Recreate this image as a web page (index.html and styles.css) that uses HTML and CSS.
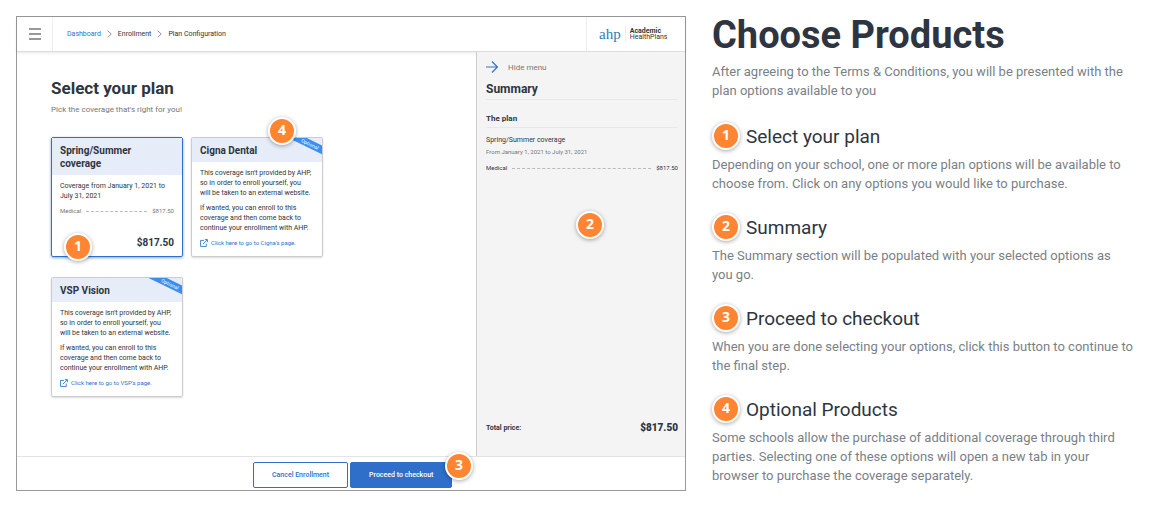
FILE: index.html
```
<!DOCTYPE html>
<html lang="en">
<head>
  <meta charset="UTF-8" />
  <meta name="viewport" content="width=device-width, initial-scale=1.0"/>
  <title>Choose Products</title>
  <link rel="stylesheet" href="styles.css">
</head>
<body>

<div class="app">
  <header class="topbar">
    <button class="menu-btn" aria-label="Open menu">
      <svg width="12" height="12" viewBox="0 0 12 12" fill="none" stroke="#333" stroke-width="1.2">
        <path d="M0 1h12M0 6h12M0 11h12"/>
      </svg>
    </button>
    <nav class="breadcrumb" aria-label="Breadcrumb">
      <a href="#">Dashboard</a>
      <svg width="5" height="8" viewBox="0 0 5 8" fill="none" stroke="#777" stroke-width="0.8"><path d="M.7 .7L4.2 4 .7 7.3"/></svg>
      <span>Enrollment</span>
      <svg width="5" height="8" viewBox="0 0 5 8" fill="none" stroke="#777" stroke-width="0.8"><path d="M.7 .7L4.2 4 .7 7.3"/></svg>
      <span>Plan Configuration</span>
    </nav>
    <div class="logo">
      <span class="logo-mark">ahp</span>
      <span class="logo-name"><b>Academic</b><br>HealthPlans</span>
    </div>
  </header>

  <div class="body">
    <main class="content">
      <h2>Select your plan</h2>
      <p class="hint">Pick the coverage that's right for you!</p>

      <div class="plans">
        <article class="plan selected">
          <h3>Spring/Summer coverage</h3>
          <div class="plan-body">
            <p>Coverage from January 1, 2021 to July 31, 2021</p>
            <div class="line small"><span>Medical</span><i></i><span>$817.50</span></div>
            <strong class="price">$817.50</strong>
          </div>
          <span class="badge badge-plan">1</span>
        </article>

        <article class="plan">
          <h3>Cigna Dental</h3>
          <div class="ribbon"><span>Optional</span></div>
          <div class="plan-body">
            <p>This coverage isn't provided by AHP,<br>so in order to enroll yourself, you<br>will be taken to an external website.</p>
            <p>If wanted, you can enroll to this coverage and then come back to continue your enrollment with AHP.</p>
            <a class="ext" href="#">
              <svg width="8" height="8" viewBox="0 0 14 14" fill="none" stroke="currentColor" stroke-width="1.5"><path d="M7 2.5H1v10.500h10V8M5 9l7.500-7.500M8.500 1H13v4.500"/></svg>
              Click here to go to Cigna's page.
            </a>
          </div>
          <span class="badge badge-optional">4</span>
        </article>

        <article class="plan">
          <h3>VSP Vision</h3>
          <div class="ribbon"><span>Optional</span></div>
          <div class="plan-body">
            <p>This coverage isn't provided by AHP,<br>so in order to enroll yourself, you<br>will be taken to an external website.</p>
            <p>If wanted, you can enroll to this coverage and then come back to continue your enrollment with AHP.</p>
            <a class="ext" href="#">
              <svg width="8" height="8" viewBox="0 0 14 14" fill="none" stroke="currentColor" stroke-width="1.5"><path d="M7 2.5H1v10.500h10V8M5 9l7.500-7.500M8.500 1H13v4.500"/></svg>
              Click here to go to VSP's page.
            </a>
          </div>
        </article>
      </div>
    </main>

    <aside class="summary">
      <button class="hide-btn">
        <svg width="12" height="12" viewBox="0 0 12 12" fill="none" stroke="#2f6fca" stroke-width="1.2"><path d="M0 6h11.300M6 .5L11.500 6 6 11.500"/></svg>
        Hide menu
      </button>
      <h2>Summary</h2>
      <h3>The plan</h3>
      <p class="plan-name">Spring/Summer coverage</p>
      <p class="plan-dates">From January 1, 2021 to July 31, 2021</p>
      <div class="line"><span>Medical</span><i></i><span>$817.50</span></div>
      <div class="total"><span>Total price:</span><strong class="price">$817.50</strong></div>
      <span class="badge badge-summary">2</span>
    </aside>
  </div>

  <footer class="actions">
    <button class="btn">Cancel Enrollment</button>
    <button class="btn primary">Proceed to checkout</button>
    <span class="badge badge-checkout">3</span>
  </footer>
</div>

<section class="guide">
  <h1>Choose Products</h1>
  <p class="intro">After agreeing to the Terms &amp; Conditions, you will be presented with the plan options available to you</p>

  <h2><span class="badge">1</span>Select your plan</h2>
  <p>Depending on your school, one or more plan options will be available to choose from. Click on any options you would like to purchase.</p>

  <h2><span class="badge">2</span>Summary</h2>
  <p>The Summary section will be populated with your selected options as<br>you go.</p>

  <h2><span class="badge">3</span>Proceed to checkout</h2>
  <p>When you are done selecting your options, click this button to continue to the final step.</p>

  <h2><span class="badge">4</span>Optional Products</h2>
  <p>Some schools allow the purchase of additional coverage through third parties. Selecting one of these options will open a new tab in your browser to purchase the coverage separately.</p>
</section>

</body>
</html>
```
FILE: styles.css
```
* {
  box-sizing: border-box;
}

body {
  font-family: Roboto, sans-serif;
  background: #fff;
  color: #2e3540;
  margin: 0;
  padding: 16px 33px 31px 16px;
  min-height: 100vh;
  display: grid;
  grid-template-columns: minmax(0, 670fr) minmax(0, 423fr);
  gap: 26px;
}

h1, h2, h3, p {
  margin: 0;
}

button {
  font-family: inherit;
  cursor: pointer;
}

a {
  color: #2f6fca;
  text-decoration: none;
}

.app {
  border: 1px solid #999;
  display: flex;
  flex-direction: column;
}

/* top bar */
.topbar {
  display: flex;
  height: 35px;
  border-bottom: 1px solid #ddd;
  box-shadow: 0 1px 3px rgba(0,0,0,0.1);
  position: relative;
}

.menu-btn {
  width: 36px;
  padding: 0;
  background: none;
  border: none;
  border-right: 1px solid #eee;
}

.menu-btn svg {
  display: block;
  margin: auto;
}

.breadcrumb {
  flex: 1;
  display: flex;
  align-items: center;
  gap: 6px;
  padding-left: 14px;
  font-size: 7px;
}

.logo {
  width: 99px;
  display: flex;
  align-items: center;
  padding-left: 12px;
  border-left: 1px solid #eee;
}

.logo-mark {
  font-family: "Liberation Serif", serif;
  font-size: 15px;
  line-height: 16px;
  color: #2a7fb8;
  padding-right: 4px;
  margin-right: 4px;
  border-right: 1px solid #eee;
}

.logo-name {
  font-size: 7px;
  line-height: 6px;
}

/* middle */
.body {
  flex: 1;
  display: flex;
}

.content {
  flex: 1;
  padding: 25px 34px 20px;
}

.content h2 {
  font-size: 17px;
  line-height: 22px;
}

.hint {
  margin-top: 6px;
  font-size: 8px;
  line-height: 10px;
  color: #777;
}

.plans {
  display: grid;
  grid-template-columns: repeat(auto-fill, 132px);
  grid-auto-rows: minmax(120px, auto);
  gap: 20px 8px;
  margin-top: 22px;
}

.plan {
  position: relative;
  display: flex;
  flex-direction: column;
  border: 1px solid #ccc;
  border-radius: 2px;
  box-shadow: 0 1px 2px rgba(0,0,0,0.15);
}

.plan.selected {
  border-color: #2f6fca;
  box-shadow: 0 1px 3px rgba(47,111,202,0.6);
}

.plan h3 {
  padding: 6px 8px 5px;
  background: #e6ecf8;
  font-size: 10px;
  line-height: 13px;
}

.plan-body {
  flex: 1;
  display: flex;
  flex-direction: column;
  padding: 6px 8px;
  font-size: 7px;
  line-height: 10px;
}

.plan-body p {
  margin-bottom: 5px;
}

.price {
  font-size: 10px;
  line-height: 14px;
}

.plan .price {
  margin-top: auto;
  text-align: right;
}

.ext {
  display: flex;
  align-items: center;
  gap: 3px;
  font-size: 6px;
}

.line {
  display: flex;
  align-items: center;
  gap: 5px;
  font-size: 6px;
  line-height: 10px;
}

.line i {
  flex: 1;
  border-top: 1px dashed #bbb;
}

.line.small {
  color: #777;
}

.ribbon {
  position: absolute;
  top: 0;
  right: 0;
  width: 36px;
  height: 20px;
  overflow: hidden;
}

.ribbon span {
  position: absolute;
  top: 2px;
  right: -13px;
  width: 50px;
  background: #3a8eee;
  color: #fff;
  font-size: 5px;
  line-height: 8px;
  text-align: center;
  transform: rotate(26deg);
}

/* summary */
.summary {
  position: relative;
  width: 209px;
  display: flex;
  flex-direction: column;
  padding: 9px 7px 21px 9px;
  background: #f4f4f4;
  border-left: 1px solid #ccc;
}

.hide-btn {
  display: flex;
  align-items: center;
  gap: 10px;
  padding: 0;
  background: none;
  border: none;
  font-size: 8px;
  color: #777;
}

.summary h2 {
  padding: 8px 0 2px;
  border-bottom: 1px solid #e8e8e8;
  font-size: 12px;
  line-height: 16px;
}

.summary h3 {
  padding: 13px 0 2px;
  border-bottom: 1px solid #e8e8e8;
  font-size: 8px;
  line-height: 12px;
}

.plan-name {
  margin-top: 7px;
  font-size: 7px;
  line-height: 11px;
}

.plan-dates {
  font-size: 6px;
  line-height: 11px;
  color: #777;
}

.summary .line {
  margin-top: 6px;
}

.total {
  display: flex;
  align-items: center;
  justify-content: space-between;
  margin-top: auto;
  font-size: 7px;
  font-weight: bold;
}

/* footer */
.actions {
  position: relative;
  display: flex;
  gap: 2px;
  height: 34px;
  padding: 5px 0 2px 236px;
  border-top: 1px solid #e4e4e4;
}

.btn {
  padding: 0 18px;
  background: #fff;
  border: 1px solid #2f6fca;
  border-radius: 2px;
  color: #2f6fca;
  font-size: 7px;
  font-weight: 500;
}

.btn.primary {
  background: #2f6fca;
  color: #fff;
}

/* numbered markers */
.badge {
  display: flex;
  align-items: center;
  justify-content: center;
  width: 28px;
  height: 28px;
  background: #ff8533;
  border: 2px solid #fff;
  border-radius: 50%;
  box-shadow: 0 1px 4px rgba(0,0,0,0.35);
  color: #fff;
  font-family: "Open Sans", sans-serif;
  font-size: 14px;
  line-height: 22px;
  padding-bottom: 2px;
  font-weight: bold;
}

.badge-plan {
  position: absolute;
  left: 12px;
  bottom: -5px;
}

.badge-optional {
  position: absolute;
  left: 76px;
  top: -21px;
}

.badge-summary {
  position: absolute;
  left: 99px;
  top: 159px;
}

.badge-checkout {
  position: absolute;
  left: 428px;
  top: -5px;
}

/* guide */
.guide h1 {
  font-size: 38px;
  line-height: 38px;
  margin-bottom: 8px;
}

.guide p {
  font-size: 13px;
  line-height: 19px;
  color: #7a7f87;
  margin-bottom: 20px;
}

.guide p.intro {
  margin-bottom: 22px;
}

.guide p:last-child {
  margin-bottom: 0;
}

.guide h2 {
  display: flex;
  align-items: center;
  gap: 6px;
  margin-bottom: 5px;
  font-size: 19px;
  font-weight: normal;
}
```
